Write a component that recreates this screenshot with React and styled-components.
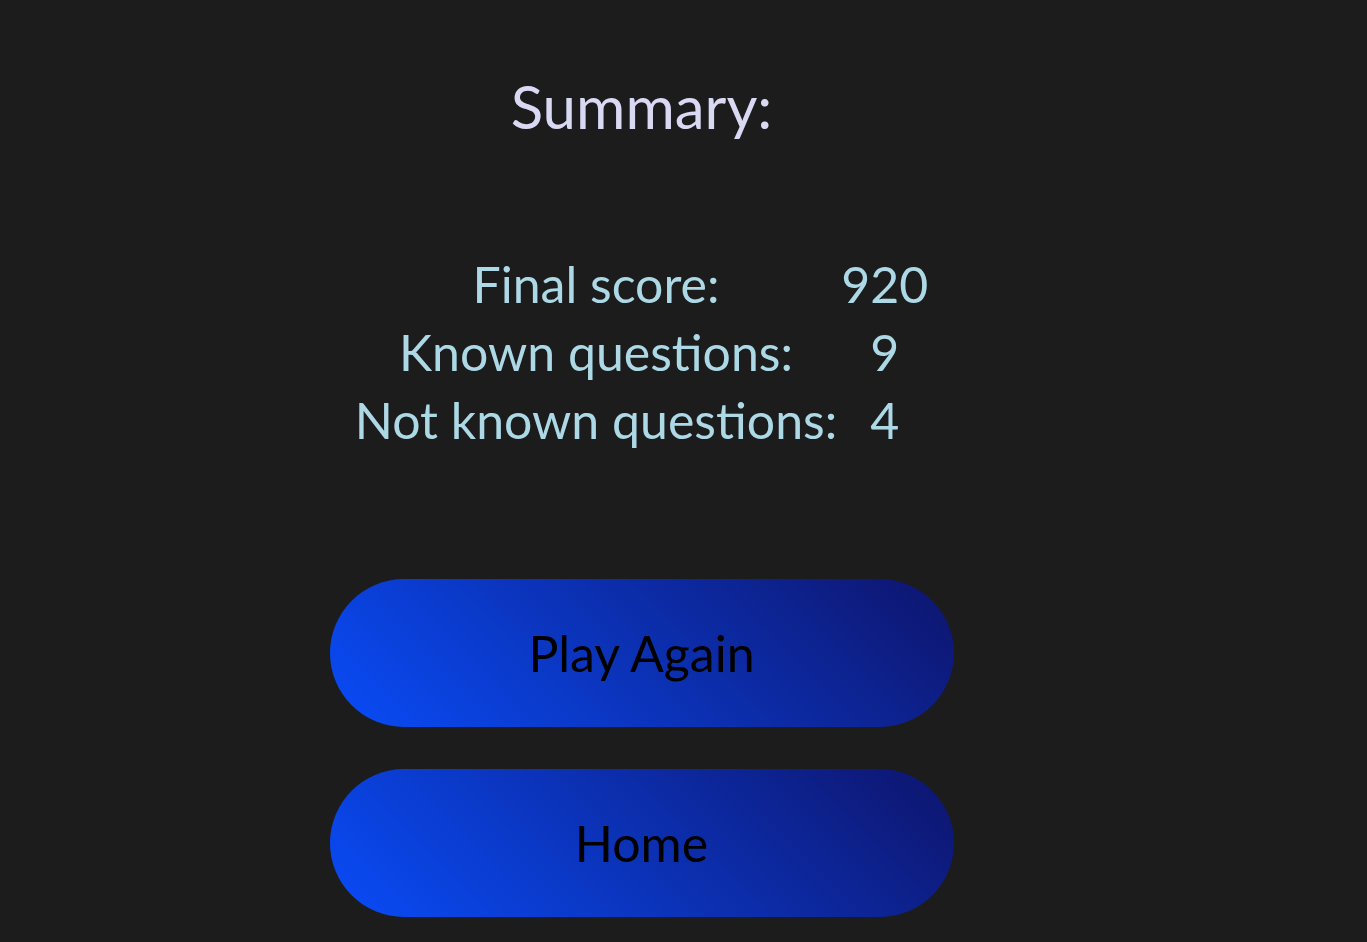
import React from "react";
import styled, { createGlobalStyle } from "styled-components";

const Global = createGlobalStyle`
  html, body { margin: 0; padding: 0; background: #1c1c1c; }
  body { font-family: "Lato", "Noto Sans", sans-serif; }
`;

const Page = styled.main`
  width: 1283px;
  min-height: 942px;
  display: flex;
  flex-direction: column;
  align-items: center;
`;

const Title = styled.h1`
  margin: 70px 0 0;
  font-size: 60px;
  line-height: 72px;
  font-weight: 400;
  color: #d9d9f3;
`;

const Stats = styled.table`
  margin-top: 108px;
  border-spacing: 2px 0;
  color: #add8e6;
  font-size: 50px;
  line-height: 68px;
`;

const Cell = styled.td`
  text-align: center;
  padding: 0 1px;
`;

const Buttons = styled.div`
  margin-top: 125px;
  display: flex;
  flex-direction: column;
  gap: 42px;
`;

const Button = styled.button`
  width: 624px;
  height: 148px;
  border: none;
  border-radius: 74px;
  background: linear-gradient(45deg, #094cf8 0%, #0e146c 100%);
  color: #000;
  font-family: inherit;
  font-size: 50px;
  cursor: pointer;
`;

const rows = [
  ["Final score:", "920"],
  ["Known questions:", "9"],
  ["Not known questions:", "4"],
];

export default function App() {
  return (
    <>
      <Global />
      <Page>
        <Title>Summary:</Title>
        <Stats>
          <tbody>
            {rows.map(([l, v]) => (
              <tr key={l}>
                <Cell>{l}</Cell>
                <Cell>{v}</Cell>
              </tr>
            ))}
          </tbody>
        </Stats>
        <Buttons>
          <Button>Play Again</Button>
          <Button>Home</Button>
        </Buttons>
      </Page>
    </>
  );
}
